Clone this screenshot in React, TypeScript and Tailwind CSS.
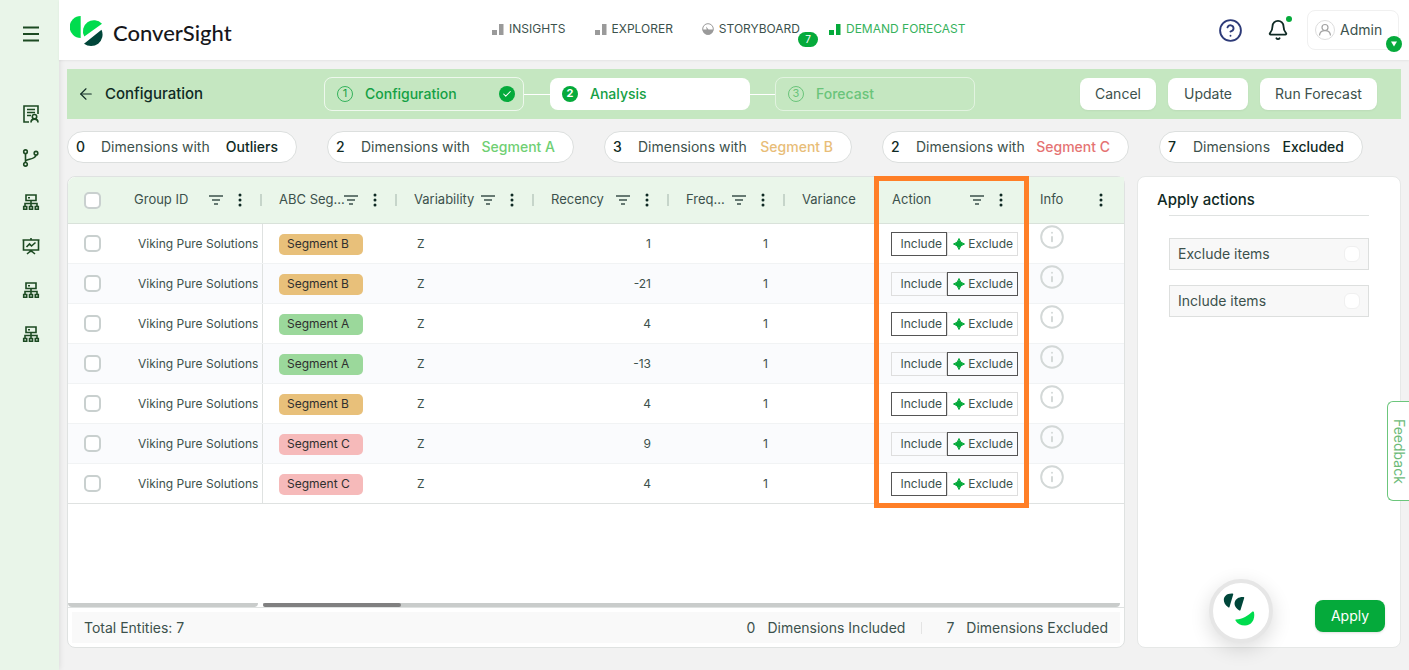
import { ArrowLeft, Bell, Check, CircleHelp, Info } from 'lucide-react'
import { useState } from 'react'
import type { ReactNode } from 'react'

type Segment = 'A' | 'B' | 'C'
type Action = 'include' | 'exclude'

const rows: { segment: Segment, recency: number, action: Action }[] = [
  { segment: 'B', recency: 1, action: 'include' },
  { segment: 'B', recency: -21, action: 'exclude' },
  { segment: 'A', recency: 4, action: 'include' },
  { segment: 'A', recency: -13, action: 'exclude' },
  { segment: 'B', recency: 4, action: 'include' },
  { segment: 'C', recency: 9, action: 'exclude' },
  { segment: 'C', recency: 4, action: 'include' },
]

const segmentColor = {
  A: 'bg-[#9bd89b]',
  B: 'bg-[#e8c07a]',
  C: 'bg-[#f6baba]',
}

const chips = [
  { count: 0, label: 'Dimensions with', value: 'Outliers', color: 'text-[#0f2a24]', width: 'w-[230px]' },
  { count: 2, label: 'Dimensions with', value: 'Segment A', color: 'text-[#6fcf73]', width: 'w-[247px]' },
  { count: 3, label: 'Dimensions with', value: 'Segment B', color: 'text-[#e8bd78]', width: 'w-[248px]' },
  { count: 2, label: 'Dimensions with', value: 'Segment C', color: 'text-[#e57373]', width: 'w-[247px]' },
  { count: 7, label: 'Dimensions', value: 'Excluded', color: 'text-[#0f2a24]', width: 'w-[204px]' },
]

export default function App() {
  return (
    <div className="flex min-h-screen bg-[#f2f2f2] font-['Inter',sans-serif] text-[#3c514c]">
      <Sidebar />
      <div className="flex min-w-0 flex-1 flex-col">
        <Header />
        <main className="flex flex-1 flex-col px-2 pt-[9px] pb-[22px]">
          <Toolbar />
          <div className="mt-3 flex gap-[30px]">
            {chips.map(chip => (
              <div
                key={chip.value}
                className={`flex h-8 shrink-0 items-center rounded-full border border-[#dcdfde] bg-white pl-2 text-sm ${chip.width}`}
              >
                <span className="w-[25px] font-medium text-[#0f2a24]">{chip.count}</span>
                <span>{chip.label}</span>
                <span className={`ml-auto pr-[18px] font-medium ${chip.color}`}>{chip.value}</span>
              </div>
            ))}
          </div>
          <div className="mt-[13px] flex flex-1 gap-3">
            <DimensionsTable />
            <ActionsPanel />
          </div>
        </main>
      </div>
      <button
        type="button"
        className="absolute top-[401px] right-0 flex h-[100px] w-[22px] items-center justify-center rounded-l-md border border-r-0 border-[#6cc67c] bg-white text-sm text-[#6dbb79] [writing-mode:vertical-rl]"
      >
        Feedback
      </button>
    </div>
  )
}

function Sidebar() {
  return (
    <nav aria-label="Main" className="flex w-[59px] shrink-0 flex-col items-center bg-[#e9f5e9] pt-6 pl-[3px] text-[#1c4a22] shadow-[0_0_6px_rgba(0,0,0,0.12)]">
      <SideButton label="Menu">
        <path d="M2 3.500h16M2 10h16M2 16.500h16" strokeWidth="1.800" />
      </SideButton>
      <div className="mt-[60px] flex flex-col gap-6">
        <SideButton label="Reports">
          <path d="M8 18H3V2h14v8M6 5.500h8M6 8.500h8M6 11.500h4" />
          <circle cx="13.500" cy="12.700" r="2.200" />
          <path d="M10 18.500c0-4.500 7-4.500 7 0" />
        </SideButton>
        <SideButton label="Branches">
          <circle cx="4.500" cy="3.700" r="1.800" />
          <circle cx="4.500" cy="16.300" r="1.800" />
          <circle cx="15" cy="5.200" r="1.800" />
          <path d="M4.500 5.500v9M4.500 13c1-2.500 10-1 10.500-6" />
        </SideButton>
        <SideButton label="Hierarchy"><Hierarchy /></SideButton>
        <SideButton label="Presentation">
          <path d="M2.500 4h15v10h-15zM1.500 4h17M10 2v2M10 14v2M6 18l3-2.500h2l3 2.500M5.500 11l3-3 2 2 4-3.500" />
        </SideButton>
        <SideButton label="Models"><Hierarchy /></SideButton>
        <SideButton label="Sources"><Hierarchy /></SideButton>
      </div>
    </nav>
  )
}

function SideButton({ label, children }: { label: string, children: ReactNode }) {
  return (
    <button type="button" aria-label={label} className="size-5">
      <svg viewBox="0 0 20 20" className="size-5" fill="none" stroke="currentColor" strokeWidth="1.600">
        {children}
      </svg>
    </button>
  )
}

function Hierarchy() {
  return <path d="M5 3h10v5.500H5zM7 5.700h2M10 8.500v6M4 14.500v-3h12v3M2.700 14.500h3v2.800h-3zM8.500 14.500h3v2.800h-3zM14.300 14.500h3v2.800h-3z" />
}

function Header() {
  return (
    <header className="flex h-[60px] shrink-0 items-center bg-white pr-[10px] pl-[11px] shadow-[0_1px_2px_rgba(0,0,0,0.06)]">
      <a href="#home" className="flex w-[422px] items-center gap-[10px] pt-1 text-[#17171b]">
        <svg viewBox="0 0 33 33" className="size-[33px]">
          <path d="M10.700 0v22a11 11 0 0 1 0-22z" fill="#00dc4e" />
          <path d="M32 7.700A11 11 0 0 0 14.300 20.500z" fill="#00dc4e" />
          <path d="M31.500 13.800A11.500 11.500 0 0 1 14 27.700z" fill="#00463a" />
        </svg>
        <span className="font-['Lato',sans-serif] text-[22px] font-medium">ConverSight</span>
      </a>
      <nav aria-label="Sections" className="flex items-center gap-[29px] pb-[2px] text-xs">
        <NavLink icon={<BarsIcon />}>INSIGHTS</NavLink>
        <NavLink icon={<BarsIcon />}>EXPLORER</NavLink>
        <div className="relative">
          <NavLink
            icon={(
              <svg viewBox="0 0 12 12" className="size-3 text-[#9a9a9a]">
                <circle cx="6" cy="6" r="5.300" fill="none" stroke="currentColor" />
                <path d="M.7 6.500h4L4 3.500l2.500 3h4.800A5.300 5.300 0 0 1 .7 6.500z" fill="currentColor" />
              </svg>
            )}
          >
            STORYBOARD
          </NavLink>
          <span className="absolute top-[11px] -right-[18px] flex h-[15px] w-5 items-center justify-center rounded-full bg-[#05aa3b] text-[10px] text-white">7</span>
        </div>
        <NavLink active icon={<BarsIcon active />}>DEMAND FORECAST</NavLink>
      </nav>
      <div className="ml-auto flex items-center">
        <button type="button" aria-label="Help" className="text-[#2d3a78]">
          <CircleHelp size={25} strokeWidth={1.8} />
        </button>
        <button type="button" aria-label="Notifications" className="relative ml-6 text-[#0f2a24]">
          <Bell size={22} strokeWidth={2} />
          <span className="absolute -top-[3px] -right-[3px] size-[6px] rounded-full bg-[#05aa3b]" />
        </button>
        <button type="button" className="relative ml-[18px] flex h-10 w-[92px] items-center gap-[5px] rounded-lg border border-[#f0f0f0] pl-[7px] text-sm">
          <svg viewBox="0 0 20 20" className="size-5 shrink-0" fill="none" stroke="#a3a3a3">
            <circle cx="10" cy="10" r="9.500" stroke="#dddddd" />
            <circle cx="10" cy="7.500" r="3" strokeWidth="1.200" />
            <path d="M4.500 15.500c.5-6.500 10.500-6.500 11 0" strokeWidth="1.200" />
          </svg>
          Admin
          <span className="absolute -right-1 -bottom-[3px] flex size-4 items-center justify-center rounded-full bg-[#05aa3b]">
            <svg viewBox="0 0 8 8" className="size-2" fill="white"><path d="M1 1.500h6L4 6.500z" /></svg>
          </span>
        </button>
      </div>
    </header>
  )
}

function NavLink({ icon, active, children }: { icon: ReactNode, active?: boolean, children: ReactNode }) {
  return (
    <a href="#section" className={`flex items-center gap-[5px] ${active ? 'text-[#35b25c]' : ''}`}>
      {icon}
      {children}
    </a>
  )
}

function BarsIcon({ active }: { active?: boolean }) {
  return (
    <svg viewBox="0 0 12 12" className="size-3" fill={active ? '#05aa3b' : '#9a9a9a'}>
      <path d="M0 7h5v5H0zM7 1h4.500v11H7z" />
    </svg>
  )
}

function Toolbar() {
  return (
    <div className="flex h-[50px] items-center bg-[#c5e7c1] pr-6">
      <div className="flex w-[257px] items-center gap-[10px] pl-[10px] text-[#0f2a24]">
        <button type="button" aria-label="Back"><ArrowLeft size={18} strokeWidth={1.5} /></button>
        <h1 className="text-[15px] font-medium">Configuration</h1>
      </div>
      <ol className="flex items-center text-sm font-medium text-[#14a044]">
        <li className="flex h-[34px] w-[200px] items-center gap-3 rounded-lg border border-white/70 px-3">
          <StepNumber value={1} className="border border-[#35b25c] font-normal" />
          Configuration
          <span className="-mr-1 ml-auto flex size-4 items-center justify-center rounded-full bg-[#05aa3b] text-white">
            <Check size={10} strokeWidth={2.5} />
          </span>
        </li>
        <li aria-hidden className="h-px w-[26px] bg-white" />
        <li className="flex h-8 w-[200px] items-center gap-3 rounded-lg bg-white px-3">
          <StepNumber value={2} className="bg-[#05aa3b] font-bold text-white" />
          Analysis
        </li>
        <li aria-hidden className="h-px w-[25px] bg-white" />
        <li className="flex h-[34px] w-[200px] items-center gap-3 rounded-lg border border-white/50 px-3 text-[#6ac47a]">
          <StepNumber value={3} className="border border-[#6ac47a] font-normal" />
          Forecast
        </li>
      </ol>
      <div className="ml-auto flex gap-3 text-sm">
        <button type="button" className="h-8 w-[76px] rounded-lg bg-white shadow-xs">Cancel</button>
        <button type="button" className="h-8 w-20 rounded-lg bg-white shadow-xs">Update</button>
        <button type="button" className="h-8 w-[117px] rounded-lg bg-white shadow-xs">Run Forecast</button>
      </div>
    </div>
  )
}

function StepNumber({ value, className }: { value: number, className: string }) {
  return (
    <span className={`flex size-4 shrink-0 items-center justify-center rounded-full text-[11px] ${className}`}>
      {value}
    </span>
  )
}

function HeaderCell({ label, filter, menu, divider }: { label: string, filter?: boolean, menu?: boolean, divider?: boolean }) {
  return (
    <th className="border-b border-[#d9e2da] p-0 font-normal">
      <div className="flex items-center pl-4">
        <span className="min-w-0 flex-1 text-left whitespace-nowrap">{label}</span>
        {filter && (
          <button type="button" aria-label={`Filter ${label}`} className="shrink-0">
            <svg viewBox="0 0 14 12" className="h-3 w-[14px]" stroke="#3c514c" strokeWidth="1.500">
              <path d="M0 2h14M3 6h8M5 10h4" />
            </svg>
          </button>
        )}
        {menu && (
          <button type="button" aria-label={`${label} menu`} className="ml-[15px] shrink-0">
            <svg viewBox="0 0 4 14" className="h-[14px] w-1" fill="#0f2a24">
              <circle cx="2" cy="2" r="1.500" />
              <circle cx="2" cy="7" r="1.500" />
              <circle cx="2" cy="12" r="1.500" />
            </svg>
          </button>
        )}
        <span className={`mr-px ml-[18px] h-3 w-[2px] shrink-0 ${divider ? 'bg-[#c6d5ca]' : ''}`} />
      </div>
    </th>
  )
}

function Checkbox({ label }: { label: string }) {
  return (
    <input
      type="checkbox"
      aria-label={label}
      className="block size-[17px] appearance-none rounded-[5px] border-2 border-[#c9d0cf] bg-white checked:bg-[#05aa3b]"
    />
  )
}

function DimensionsTable() {
  return (
    <section className="flex min-w-0 flex-1 flex-col rounded-lg border border-[#dfe2e1] bg-white">
      <div className="relative">
        <table className="w-full table-fixed border-separate border-spacing-0 text-xs">
          <colgroup>
            <col className="w-[50px]" />
            <col className="w-[145px]" />
            <col className="w-[135px]" />
            <col className="w-[137px]" />
            <col className="w-[135px]" />
            <col className="w-[116px]" />
            <col />
            <col className="w-[148px]" />
            <col className="w-[100px]" />
          </colgroup>
          <thead>
            <tr className="h-[47px] bg-[#eaf6ea] text-[13px]">
              <th className="rounded-tl-lg border-b border-[#d9e2da] p-0 pl-4"><Checkbox label="Select all rows" /></th>
              <HeaderCell label="Group ID" filter menu divider />
              <HeaderCell label="ABC Seg..." filter menu divider />
              <HeaderCell label="Variability" filter menu divider />
              <HeaderCell label="Recency" filter menu divider />
              <HeaderCell label="Freq..." filter menu divider />
              <HeaderCell label="Variance" />
              <HeaderCell label="Action" filter menu />
              <HeaderCell label="Info" menu />
            </tr>
          </thead>
          <tbody>
            {rows.map((row, i) => <DimensionRow key={i} index={i} {...row} />)}
          </tbody>
        </table>
        {/* Callout around the action column */}
        <div className="pointer-events-none absolute -top-px right-[95px] -bottom-1 w-[155px] border-5 border-[#ff7f27]" />
      </div>

      <div className="mt-auto flex h-[5px] items-stretch gap-[5px] border-b border-[#dfe2e1] pr-1">
        <div className="w-[190px] rounded-b-sm bg-[#c9cccb]" />
        <div className="flex-1 rounded-b-sm bg-[#c9cccb]">
          <div className="h-full w-[138px] rounded-sm bg-[#808080]" />
        </div>
      </div>
      <footer className="m-1 flex h-[31px] items-center bg-[#f9f9f9] px-3 text-sm">
        <span>Total Entities: 7</span>
        <span className="ml-auto flex gap-3">
          <span>0</span>
          <span>Dimensions Included</span>
        </span>
        <span className="ml-4 h-3 w-px bg-[#e4e4e4]" />
        <span className="flex gap-3 pl-6">
          <span>7</span>
          <span>Dimensions Excluded</span>
        </span>
      </footer>
    </section>
  )
}

function DimensionRow({ index, segment, recency, action }: { index: number, segment: Segment, recency: number, action: Action }) {
  const [selected, setSelected] = useState<Action>(action)
  const last = index === rows.length - 1

  return (
    <tr className={`h-10 ${index % 2 ? 'bg-[#fafbfd]' : 'bg-white'} ${last ? '[&>td]:border-[#dfe2e1]' : '[&>td]:border-[#f1f3f4]'} [&>td]:border-b [&>td]:p-0`}>
      <td><div className="pl-4"><Checkbox label={`Select row ${index + 1}`} /></div></td>
      <td><div className="flex h-[39px] items-center overflow-hidden border-r border-[#dfe2e1] pl-5 whitespace-nowrap">Viking Pure Solutions</div></td>
      <td>
        <div className="pt-px pl-4">
          <span className={`flex h-[21px] w-[84px] items-center rounded-[5px] pl-2 text-[#2f2f2f] ${segmentColor[segment]}`}>
            {`Segment ${segment}`}
          </span>
        </div>
      </td>
      <td><div className="pl-[19px]">Z</div></td>
      <td><div className="pr-[19px] text-right">{recency}</div></td>
      <td><div className="pr-[18px] text-right">1</div></td>
      <td />
      <td>
        <div className="flex pl-[15px]">
          {(['include', 'exclude'] as const).map(option => (
            <button
              key={option}
              type="button"
              aria-pressed={selected === option}
              onClick={() => setSelected(option)}
              className={`flex h-6 items-center justify-end gap-[3px] border pr-1 ${option === 'include' ? 'w-14' : 'w-[71px]'} ${selected === option ? 'border-[#555555]' : 'border-[#dedede]'}`}
            >
              {option === 'exclude' && (
                <svg viewBox="0 0 12 12" className="size-3" fill="#05aa3b">
                  <path d="M6 .5Q7 5 11.500 6 7 7 6 11.500 5 7 .5 6 5 5 6 .5z" stroke="#05aa3b" strokeWidth="1" />
                </svg>
              )}
              {option === 'include' ? 'Include' : 'Exclude'}
            </button>
          ))}
        </div>
      </td>
      <td>
        <button type="button" aria-label="Row details" className="mb-[13px] ml-[15px] block text-[#d3d8d7]">
          <Info size={26} strokeWidth={1.8} />
        </button>
      </td>
    </tr>
  )
}

function ActionsPanel() {
  return (
    <aside className="flex w-[264px] shrink-0 flex-col rounded-lg border border-[#e6e8e7] bg-white">
      <h2 className="mt-3 px-[19px] text-[15px] font-medium text-[#0f2a24]">Apply actions</h2>
      <div className="px-[31px]">
        <hr className="mt-[3px] border-[#dfe2e1]" />
        <div className="mt-[22px] flex flex-col gap-[15px] text-sm">
          {['Exclude items', 'Include items'].map(item => (
            <label key={item} className="flex h-8 items-center justify-between border border-[#dddfde] bg-[#f8f8f8] px-2">
              {item}
              <input type="checkbox" className="size-4 appearance-none rounded-md border border-[#f0f0f0] bg-white checked:bg-[#05aa3b]" />
            </label>
          ))}
        </div>
      </div>
      <div className="mt-auto mb-1 flex items-end justify-end gap-[42px] pr-[15px]">
        <button
          type="button"
          aria-label="Open assistant"
          className="flex size-16 items-center justify-center rounded-full border-4 border-[#e6e6e6] bg-white shadow-[0_6px_20px_rgba(0,0,0,0.14)]"
        >
          <svg viewBox="0 0 36 36" className="size-9">
            <path d="M9.500 .5Q10.500 .5 10.200 1.500L6.500 14Q6 15 5 14C-2 9 0 0 9.500 .5z" fill="#00463a" />
            <path d="M20.500 4Q21.500 4 21.200 5L17.500 17Q17 18 16 17.200C8.500 12.500 11 3.500 20.500 4z" fill="#00463a" />
            <path d="M13 26.500C19.500 26.500 25 22.500 29.500 18.600Q30.700 18 31 19.200C32.500 27 28 32.500 22 32.500 17.500 32.500 14.500 31 12.500 27.500Q12 26.500 13 26.500z" fill="#00dc4e" />
          </svg>
        </button>
        <button type="button" className="mb-[11px] h-8 w-[70px] rounded-lg bg-[#05aa3b] text-sm text-white shadow-sm">Apply</button>
      </div>
    </aside>
  )
}
